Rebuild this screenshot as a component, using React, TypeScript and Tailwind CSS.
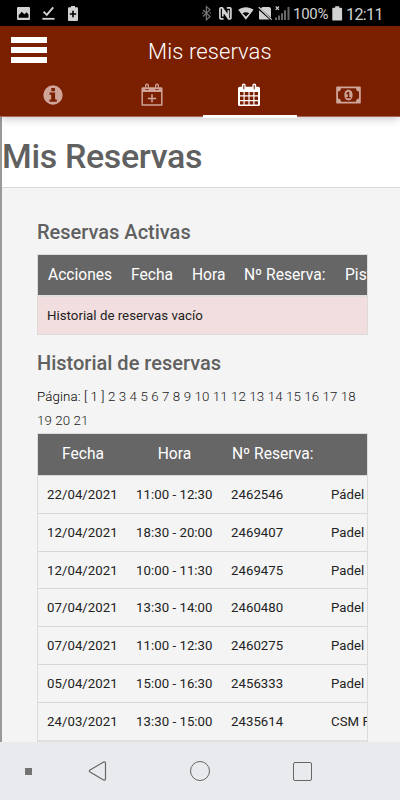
import * as React from 'react';
import { clsx } from 'clsx';

const pages = Array.from({ length: 21 }, (_, i) => i + 1);

const history = [
  { date: '22/04/2021', time: '11:00 - 12:30', id: '2462546', court: 'Pádel' },
  { date: '12/04/2021', time: '18:30 - 20:00', id: '2469407', court: 'Padel' },
  { date: '12/04/2021', time: '10:00 - 11:30', id: '2469475', court: 'Padel' },
  { date: '07/04/2021', time: '13:30 - 14:00', id: '2460480', court: 'Padel' },
  { date: '07/04/2021', time: '11:00 - 12:30', id: '2460275', court: 'Padel' },
  { date: '05/04/2021', time: '15:00 - 16:30', id: '2456333', court: 'Padel' },
  { date: '24/03/2021', time: '13:30 - 15:00', id: '2435614', court: 'CSM P' },
];

// Android status bar: notifications on the left, system state on the right
const StatusBar = () => (
  <div className="flex h-[26px] shrink-0 items-center bg-black text-[#d2d2d2]">
    <svg className="h-[26px] w-[290px] shrink-0" viewBox="0 0 290 26" fill="currentColor">
      <path
        fillRule="evenodd"
        d="M18 7h11a1 1 0 0 1 1 1v11a1 1 0 0 1-1 1H18a1 1 0 0 1-1-1V8a1 1 0 0 1 1-1zM18.7 17.7h9.8v-3.2l-1.8-2.2-2.3 2-2.8-2.6-1.6 2.2-1.3.8z"
      />
      <path d="M43.6 11.7l3.2 3.2 6.4-7.6" fill="none" stroke="currentColor" strokeWidth="1.9" />
      <path d="M42.3 17.9h12.2v1.8H42.3z" />
      <path
        fillRule="evenodd"
        d="M71 6h4v1.3h2a1 1 0 0 1 1 1V20a1 1 0 0 1-1 1h-8a1 1 0 0 1-1-1V8.3a1 1 0 0 1 1-1h2zM72.2 10.8v2.4h-2.4v1.6h2.4v2.4h1.6v-2.4h2.4v-1.6h-2.4v-2.4z"
      />
      <path
        d="M203 10l7 6.5-3.6 3.2V6.6l3.6 3.2-7 6.700"
        fill="none"
        stroke="#707070"
        strokeWidth="1.3"
      />
      <path d="M202.3 13h1.2M209.600 13h1.200" stroke="#707070" strokeWidth="1.3" />
      {/* NFC */}
      <path
        d="M223.5 18.9h-2.700a.9.9 0 0 1-.9-.9V8.800a.9.9 0 0 1 .9-.9h1.500l6.100 8.600v-6.300M226.800 7.900h3.200a.9.9 0 0 1 .9.9V18a.9.9 0 0 1-.9.9h-1.300l-5.900-8.400v6"
        fill="none"
        stroke="currentColor"
        strokeWidth="1.7"
      />
      <path
        fillRule="evenodd"
        d="M238.200 9.800c4.500-3.500 10.900-3.500 15.400 0L245.900 19.700zM242.500 13.300l3.400 3.200 3.400-3.200c-2-1.300-4.800-1.300-6.800 0z"
      />
      <path d="M262.500 7h7l1.500 1.500v9.300L260.700 8.600zM259 10.200l10.600 9.400h-9.800a.8.8 0 0 1-.8-.8z" />
      <path d="M258.800 7.300l12.800 12.300" stroke="currentColor" strokeWidth="1.2" />
      <path d="M275.700 6.500l3.300 3.300M279 6.500l-3.300 3.300" stroke="currentColor" strokeWidth="1.1" />
      <path
        d="M276 19.900v-2.300M279 19.900v-4.400M282 19.900v-6.700M285 19.900v-9.600M288.500 19.900V7"
        stroke="#686868"
        strokeWidth="2"
      />
    </svg>
    <span className="ml-[3px] w-[37px] whitespace-nowrap pt-[3px] text-[15px] leading-none tracking-[-0.3px]">
      100%
    </span>
    <svg className="ml-[2px] h-[26px] w-[11px] shrink-0" viewBox="0 0 11 26" fill="currentColor">
      <path d="M3.200 6.300h4v1.500h2a.9.9 0 0 1 .9.9v11a.9.9 0 0 1-.9.9h-8a.9.9 0 0 1-.9-.9v-11a.9.9 0 0 1 .9-.9h2z" />
    </svg>
    <span className="ml-[3px] whitespace-nowrap pt-[3px] text-[16px] leading-none tracking-[-0.6px]">
      12:11
    </span>
  </div>
);

const InfoIcon = () => (
  <svg width="20" height="20" viewBox="0 0 20 20" fill="currentColor">
    <path
      fillRule="evenodd"
      d="M10 .3a9.700 9.700 0 1 1 0 19.400A9.700 9.700 0 0 1 10 .3zM8.300 3v3.300h3.600V3zM6.500 7.500v2.300h1.700v4.600H6.500v2.300h7.300v-2.300h-1.700V7.500z"
    />
  </svg>
);

const CalendarPlusIcon = () => (
  <svg width="22" height="24" viewBox="0 0 22 24" fill="none" stroke="currentColor">
    <path d="M1.200 5.200h19.600v16.900H1.200z" strokeWidth="1.5" strokeLinejoin="round" />
    <path d="M1 4.500h3v2.400h4V4.500h6v2.400h4V4.500h3V9H1z" fill="currentColor" stroke="none" />
    <path d="M4.700 6.500V2.200q0-1 1.300-1t1.300 1v4.300M14.700 6.500V2.200q0-1 1.300-1t1.300 1v4.300" strokeWidth="1.3" />
    <path d="M11 11.200v8.400M6.800 15.400h8.400" strokeWidth="1.5" />
  </svg>
);

const CalendarIcon = () => (
  <svg width="22" height="24" viewBox="0 0 22 24" fill="currentColor">
    <path
      fillRule="evenodd"
      d="M1.500 3.800h2.300V2.500Q3.800.5 5.700.5t2 2v1.300h6.600V2.500q0-2 2-2t1.900 2v1.300h2.300q1.500 0 1.500 1.500v16.200q0 1.500-1.500 1.500h-19Q0 23 0 21.500V5.300q0-1.500 1.500-1.500zM5.300 2v4.300h1V2zM15.700 2v4.300h1V2zM2 9v3.300h3.500V9zM6.700 9v3.300h3.700V9zM11.600 9v3.300h3.700V9zM16.500 9v3.300H20V9zM2 13.500V17h3.500v-3.500zM6.700 13.500V17h3.700v-3.500zM11.600 13.500V17h3.700v-3.500zM16.500 13.500V17H20v-3.500zM2 18.200v3.200h3.500v-3.200zM6.700 18.200v3.200h3.700v-3.200zM11.600 18.200v3.200h3.700v-3.200zM16.500 18.200v3.200H20v-3.200z"
    />
  </svg>
);

const MoneyIcon = () => (
  <svg width="25" height="18" viewBox="0 0 25 18" fill="currentColor">
    <path
      fillRule="evenodd"
      d="M1 .5h23a.8.8 0 0 1 .8.8v15.400a.8.8 0 0 1-.8.8H1a.8.8 0 0 1-.8-.8V1.300A.8.8 0 0 1 1 .5zM5 2.300A3.300 3.300 0 0 1 2 5.500v7a3.300 3.300 0 0 1 3 3.200h15a3.300 3.300 0 0 1 3-3.200v-7a3.300 3.300 0 0 1-3-3.200z"
    />
    <path
      fillRule="evenodd"
      d="M12.500 3.700c2.700 0 4.100 2.300 4.100 5.300s-1.400 5.300-4.100 5.300S8.400 12 8.400 9s1.400-5.300 4.100-5.300zM12 5.800L10 7.600l.8.900 1-.8v3.400h-1.500v1.200h4.400v-1.200h-1.400V5.800z"
    />
  </svg>
);

const tabs = [
  { name: 'info', icon: <InfoIcon />, active: false },
  { name: 'new', icon: <CalendarPlusIcon />, active: false },
  { name: 'bookings', icon: <CalendarIcon />, active: true },
  { name: 'payments', icon: <MoneyIcon />, active: false },
];

const AppHeader = () => (
  <header className="relative z-10 h-[91px] shrink-0 border-b border-[#aa6654] bg-[#7a1f00] text-white shadow-[0_3px_8px_-1px_rgba(0,0,0,0.22)]">
    <div className="flex h-[48px] items-center">
      <button aria-label="Menú" className="ml-[11px] flex w-[36px] flex-col gap-[4px]">
        <span className="h-[6px] bg-white" />
        <span className="h-[6px] bg-white" />
        <span className="h-[6px] bg-white" />
      </button>
      <span className="ml-[101px] whitespace-nowrap pt-[2px] text-[22px] font-light tracking-[0.1px]">
        Mis reservas
      </span>
    </div>
    {/* the active underline hangs slightly below the bar */}
    <nav className="grid h-[44px] grid-cols-[107px_96px_94px_103px]">
      {tabs.map((tab) => (
        <div
          key={tab.name}
          className={clsx(
            'flex items-center justify-center border-b-[3px]',
            tab.active ? 'border-white pr-[2px] text-white' : 'border-transparent text-[#cfa499]',
            tab.name === 'new' && 'pr-[7px]',
            (tab.name === 'payments' || tab.name === 'info') && 'pr-[1px]'
          )}
        >
          {tab.icon}
        </div>
      ))}
    </nav>
  </header>
);

const SectionTitle = ({ children }: { children: React.ReactNode }) => (
  <h2 className="whitespace-nowrap text-[20px] font-medium leading-[24px] text-[#606060]">
    {children}
  </h2>
);

const ActiveTable = () => (
  <div className="mt-[10px] w-[331px] overflow-hidden border border-[#dcdcdc]">
    <div className="flex h-[40px] items-center whitespace-nowrap bg-[#666] pl-[10px] pt-[1px] text-[15.6px] text-white">
      <span className="w-[83px] shrink-0">Acciones</span>
      <span className="w-[61px] shrink-0">Fecha</span>
      <span className="w-[52px] shrink-0">Hora</span>
      <span className="w-[101px] shrink-0">Nº Reserva:</span>
      <span className="shrink-0">Pista</span>
    </div>
    <div className="flex h-[39px] items-center border-t-2 border-[#e2dcdc] bg-[#f2dede] pl-[9px] text-[13.3px] text-[#222]">
      Historial de reservas vacío
    </div>
  </div>
);

const HistoryTable = () => (
  <div className="w-[331px] overflow-hidden border border-[#dcdcdc]">
    <div className="flex h-[41px] items-center whitespace-nowrap bg-[#666] text-[15.6px] text-white">
      <span className="w-[90px] shrink-0 text-center">Fecha</span>
      <span className="w-[93px] shrink-0 text-center">Hora</span>
      <span className="ml-[11px] shrink-0">Nº Reserva:</span>
    </div>
    {history.map((row) => (
      <div
        key={row.id}
        className="flex h-[37.8px] items-center whitespace-nowrap border-t border-[#d8d8d8] pl-[9px] pt-[1px] text-[13.2px] tracking-[0.05px] text-[#222]"
      >
        <span className="w-[89px] shrink-0">{row.date}</span>
        <span className="w-[95px] shrink-0">{row.time}</span>
        <span className="w-[100px] shrink-0">{row.id}</span>
        <span className="shrink-0">{row.court}</span>
      </div>
    ))}
    <div className="h-[20px] border-t-2 border-[#e0e0e0]" />
  </div>
);

const NavigationBar = () => (
  <div className="flex h-[58px] shrink-0 items-center bg-[#e9eaee] text-[#666]">
    <span className="ml-[25px] size-[7px] bg-[#737373]" />
    <svg
      className="ml-[56px]"
      width="19"
      height="20"
      viewBox="0 0 19 20"
      fill="none"
      stroke="currentColor"
      strokeWidth="1.2"
    >
      <path d="M15.600 1.100Q17.500.3 17.500 2.200v15.600q0 1.900-1.900 1.100L2 11Q.6 10 2 9z" />
    </svg>
    <span className="ml-[83px] size-[20px] rounded-full border border-current" />
    <span className="ml-[83px] size-[19px] rounded-[2px] border border-current" />
  </div>
);

export default function App() {
  return (
    <div className="flex h-[800px] w-[400px] flex-col overflow-hidden bg-white font-['Roboto',sans-serif]">
      <StatusBar />
      <AppHeader />
      <main className="min-h-0 flex-1 overflow-hidden border-l-2 border-[#999] bg-[#f4f4f4]">
        <h1 className="flex h-[71px] items-center whitespace-nowrap border-b border-[#d9d9d9] bg-white pt-[8px] text-[34px] font-medium tracking-[-0.35px] text-[#606060]">
          Mis Reservas
        </h1>
        <div className="pl-[35px] pt-[32px]">
          <SectionTitle>Reservas Activas</SectionTitle>
          <ActiveTable />
          <div className="mt-[16px]">
            <SectionTitle>Historial de reservas</SectionTitle>
          </div>
          <p className="mt-[10px] w-[331px] whitespace-pre-line text-[13.3px] font-light leading-[24px] tracking-[0.1px] text-[#222]">
            <span className="text-black">Página: [ 1 ]</span>
            {` ${pages.slice(1, 18).join(' ')}\n${pages.slice(18).join(' ')}`}
          </p>
          <HistoryTable />
        </div>
      </main>
      <NavigationBar />
    </div>
  );
}
